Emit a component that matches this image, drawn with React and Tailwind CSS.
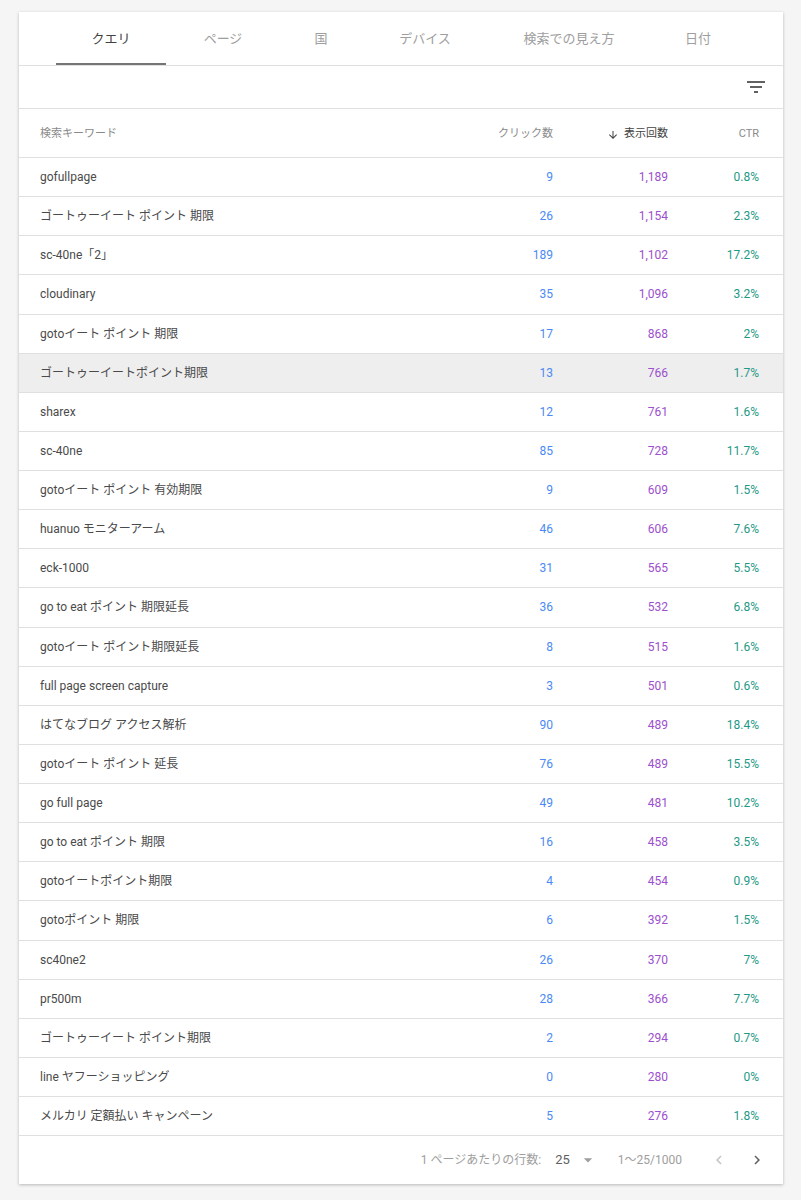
const tabs = [
  { label: 'クエリ', w: 'w-[110px]', active: true },
  { label: 'ページ', w: 'w-[114px]' },
  { label: '国', w: 'w-[82px]' },
  { label: 'デバイス', w: 'w-[126px]' },
  { label: '検索での見え方', w: 'w-[162px]' },
  { label: '日付', w: 'w-[96px]' },
];

const rows = [
  ['gofullpage', '9', '1,189', '0.8%'],
  ['ゴートゥーイート ポイント 期限', '26', '1,154', '2.3%'],
  ['sc-40ne「2」', '189', '1,102', '17.2%'],
  ['cloudinary', '35', '1,096', '3.2%'],
  ['gotoイート ポイント 期限', '17', '868', '2%'],
  ['ゴートゥーイートポイント期限', '13', '766', '1.7%'],
  ['sharex', '12', '761', '1.6%'],
  ['sc-40ne', '85', '728', '11.7%'],
  ['gotoイート ポイント 有効期限', '9', '609', '1.5%'],
  ['huanuo モニターアーム', '46', '606', '7.6%'],
  ['eck-1000', '31', '565', '5.5%'],
  ['go to eat ポイント 期限延長', '36', '532', '6.8%'],
  ['gotoイート ポイント期限延長', '8', '515', '1.6%'],
  ['full page screen capture', '3', '501', '0.6%'],
  ['はてなブログ アクセス解析', '90', '489', '18.4%'],
  ['gotoイート ポイント 延長', '76', '489', '15.5%'],
  ['go full page', '49', '481', '10.2%'],
  ['go to eat ポイント 期限', '16', '458', '3.5%'],
  ['gotoイートポイント期限', '4', '454', '0.9%'],
  ['gotoポイント 期限', '6', '392', '1.5%'],
  ['sc40ne2', '26', '370', '7%'],
  ['pr500m', '28', '366', '7.7%'],
  ['ゴートゥーイート ポイント期限', '2', '294', '0.7%'],
  ['line ヤフーショッピング', '0', '280', '0%'],
  ['メルカリ 定額払い キャンペーン', '5', '276', '1.8%'],
];

const font = { fontFamily: 'Roboto, "Noto Sans CJK JP", sans-serif' };

const App = () => {
  return (
    <div className="min-h-[1200px] bg-[#f5f5f5] pt-[12px] pb-[16px]" style={font}>
      <div className="ml-[19px] w-[764px] bg-white shadow-[0_1px_3px_rgba(0,0,0,0.25)]">
        {/* tabs */}
        <div className="flex h-[54px] pl-[37px] border-b border-[#e0e0e0]">
          {tabs.map(t => (
            <div
              key={t.label}
              className={`${t.w} relative flex items-center justify-center text-[13px] ${t.active ? 'text-[#424242]' : 'text-[#9e9e9e]'}`}
            >
              {t.label}
              {t.active && <div className="absolute left-0 right-0 bottom-0 h-[2px] bg-[#757575]" />}
            </div>
          ))}
        </div>

        {/* toolbar */}
        <div className="flex h-[43px] items-center justify-end pr-[15px] border-b border-[#e0e0e0]">
          <svg width="24" height="24" viewBox="0 0 24 24" fill="#616161">
            <path d="M10 18h4v-2h-4v2zM3 6v2h18V6H3zm3 7h12v-2H6v2z" />
          </svg>
        </div>

        {/* header */}
        <div className="grid grid-cols-[1fr_120px_115px_91px] h-[49px] items-center pt-[3px] pl-[21px] pr-[24px] border-b border-[#e0e0e0] text-[11px] text-[#8a8a8a]">
          <div>検索キーワード</div>
          <div className="text-right">クリック数</div>
          <div className="flex justify-end items-center gap-[5px] text-[#424242]">
            <svg width="12" height="12" viewBox="0 0 24 24" fill="#424242">
              <path d="M20 12l-1.41-1.41L13 16.17V4h-2v12.17l-5.58-5.59L4 12l8 8 8-8z" />
            </svg>
            <span>表示回数</span>
          </div>
          <div className="text-right">CTR</div>
        </div>

        {/* rows */}
        {rows.map((r, i) => (
          <div
            key={i}
            className={`grid grid-cols-[1fr_120px_115px_91px] h-[39.125px] items-center pl-[21px] pr-[24px] border-b border-[#e0e0e0] text-[12px] ${i === 5 ? 'bg-[#eeeeee]' : ''}`}
          >
            <div className="text-[#4a4a4a]">{r[0]}</div>
            <div className="text-right text-[#4a8af4]">{r[1]}</div>
            <div className="text-right text-[#9c4fce]">{r[2]}</div>
            <div className="text-right text-[#1e9985]">{r[3]}</div>
          </div>
        ))}

        {/* footer */}
        <div className="flex h-[48px] items-center justify-end pr-[17px] text-[12px] text-[#9e9e9e]">
          <span>1 ページあたりの行数:</span>
          <span className="ml-[14px] text-[#616161] text-[13px]">25</span>
          <svg className="ml-[8px]" width="20" height="20" viewBox="0 0 24 24" fill="#9e9e9e">
            <path d="M7 10l5 5 5-5z" />
          </svg>
          <span className="ml-[20px]">1〜25/1000</span>
          <svg className="ml-[28px]" width="18" height="18" viewBox="0 0 24 24" fill="#c4c4c4">
            <path d="M15.41 7.41L14 6l-6 6 6 6 1.41-1.41L10.83 12z" />
          </svg>
          <svg className="ml-[20px]" width="18" height="18" viewBox="0 0 24 24" fill="#616161">
            <path d="M10 6L8.59 7.41 13.17 12l-4.58 4.59L10 18l6-6z" />
          </svg>
        </div>
      </div>
    </div>
  );
};

export default App;
